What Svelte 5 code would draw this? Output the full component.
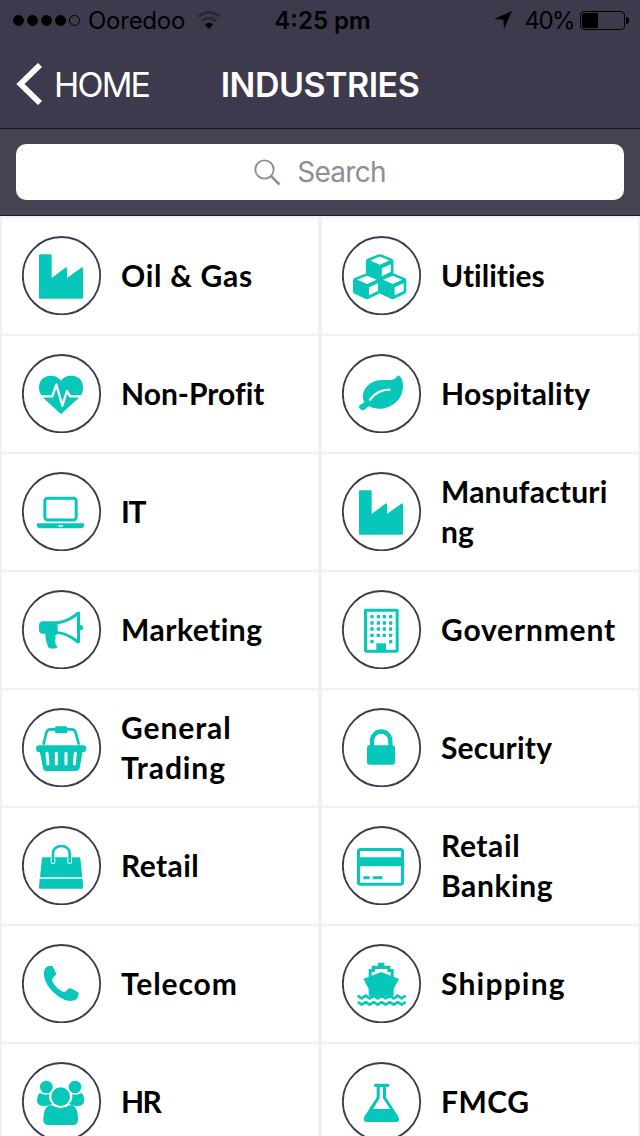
<script lang="ts">
interface Industry {
  name: string;
  icon: string;
  track: number;
}

const industries: Industry[] = [
  { name: "Oil & Gas", icon: "factory", track: 0.7 },
  { name: "Utilities", icon: "cubes", track: 0 },
  { name: "Non-Profit", icon: "heartbeat", track: 0 },
  { name: "Hospitality", icon: "leaf", track: 0.3 },
  { name: "IT", icon: "laptop", track: -1.5 },
  { name: "Manufacturing", icon: "factory", track: 0.2 },
  { name: "Marketing", icon: "megaphone", track: 0.5 },
  { name: "Government", icon: "building", track: 0.8 },
  { name: "General Trading", icon: "basket", track: 0.9 },
  { name: "Security", icon: "lock", track: 0.2 },
  { name: "Retail", icon: "bag", track: 0.4 },
  { name: "Retail Banking", icon: "card", track: 0.6 },
  { name: "Telecom", icon: "phone", track: 0.9 },
  { name: "Shipping", icon: "ship", track: 1.2 },
  { name: "HR", icon: "people", track: -1.5 },
  { name: "FMCG", icon: "flask", track: 0.5 },
];

const signal = [true, true, true, true, false];
const battery = 40;

const cubeOffsets = [[0, 0], [77, 0], [38.5, -57.5]];
const windows = [75, 94, 112, 131, 150].flatMap((y, row) =>
  (row === 4 ? [85, 141] : [85, 104, 122, 141]).map((x) => ({ x, y })),
);
const wave = "l12 8l12-8".repeat(6);
</script>

{#snippet glyph(name: string)}
  {#if name === "factory"}
    <path d="M54 55h31q4 0 4 4v67l41-31q5-3 5 1v30l43-31q5-3 5 1v89q0 3-3 3H54q-3 0-3-3V58q0-3 3-3z" />
  {:else if name === "cubes"}
    {#each cubeOffsets as [x, y]}
      <path
        transform={`translate(${x} ${y})`}
        fill-rule="evenodd"
        d="M70 113q5-2 10 0l31 13q5 2 5 7v33q0 5-5 7l-31 15q-5 2-10 0l-32-15q-5-2-5-7v-33q0-5 5-7zM75 119L46 131l29 13 29-13zM81 154v24l27-13v-23z"
      />
    {/each}
  {:else if name === "heartbeat"}
    <path d="M117 81C108 68 97 65 86 65C64 65 51 80 51 99C51 118 60 128 70 137L113 177Q117 181 121 177L164 137C176 127 183 118 183 99C183 80 170 65 149 65C136 65 125 68 117 81z" />
    <path class="cut" stroke-width="7" d="M49 127H91L103 92L121 155L135 111L144 127H185" />
  {:else if name === "leaf"}
    <path d="M172 65C180 72 183 82 183 95C183 140 145 165 108 164C95 164 87 159 82 157C74 159 69 170 62 169C55 168 50 162 51 157C52 152 60 152 66 145C69 141 60 137 63 122C66 98 90 82 110 79C135 76 150 82 162 71Q168 63 172 65z" />
    <path class="cut" stroke-width="7" d="M84 137Q106 107 142 107" />
  {:else if name === "laptop"}
    <rect class="line" x="68.500" y="79" width="94" height="65" rx="8" />
    <path fill-rule="evenodd" d="M45 154h141v7q-2 8-12 8H57q-10 0-12-8zM109 159v5h14v-5z" />
  {:else if name === "megaphone"}
    <path fill-rule="evenodd" d="M63 94H104C128 93 150 79 164 67Q169 63 174 67V105Q183 105 183 113T174 121V156Q170 164 164 159C146 144 126 133 106 132Q96 137 102 145Q96 150 101 157Q98 164 107 171C104 177 86 177 80 174C74 158 70 148 70 131H62Q51 130 51 119V106Q51 95 63 94zM107 102V124C128 126 150 137 165 148V78C150 89 128 101 107 102z" />
  {:else if name === "building"}
    <rect class="line" x="70.500" y="60.500" width="95" height="123" rx="1" />
    {#each windows as w}
      <rect x={w.x} y={w.y} width="10" height="10" rx="2" />
    {/each}
    <rect x="103" y="160" width="29" height="24" />
  {:else if name === "basket"}
    <path class="line thin" d="M65 107L73 74Q76 64 86 64H149Q158 64 161 74L170 107" />
    <rect x="99" y="55" width="37" height="21" rx="5" />
    <rect x="42" y="112" width="151" height="20" rx="10" />
    <path d="M53 128H182L173 181Q171 189 164 189H71Q65 189 63 181z" />
    <path class="cut" stroke-width="9" d="M75 136L78 168M103 136V168M132 136V168M160 136L157 168" />
  {:else if name === "bag"}
    <path d="M64 94H171Q174 94 175 97L181 154H54L60 97Q61 94 64 94zM53 158H182L183 185Q183 188 180 188H54Q51 188 51 185z" />
    <path class="cut" stroke-width="14" d="M93 98V107M143 98V107" />
    <path class="line thin" d="M93 107V81a25 21 0 0 1 50 0V107" />
  {:else if name === "lock"}
    <rect x="75" y="112" width="84" height="58" rx="7" />
    <path class="line thick" d="M90 116V98a27.500 27.500 0 0 1 55 0V116" />
  {:else if name === "card"}
    <rect class="line" x="49.500" y="70.500" width="132" height="104" rx="6" />
    <path d="M46 94H185V121H46zM64 151H83V160H64zM92 151H121V160H92z" />
  {:else if name === "phone"}
    <path d="M92 67L102 88Q104 92 98 96T90 108C93 122 112 141 126 144Q131 144 136 137Q141 131 146 133L166 143Q170 145 170 150Q168 162 163 166C150 173 137 172 122 164C99 153 75 127 69 107C65 94 64 84 69 74C74 66 86 63 92 67z" />
  {:else if name === "ship"}
    <path d="M108 56h19v9h18v10h10V99L171 104L155 135V154L143 163L131 156L118 163L106 156L93 163L80 154V135L64 104L80 99V75h9V65h19zM99 75v9H89V95L117 84L146 95V84H136V75z" fill-rule="evenodd" />
    <path class="line zigzag" d={`M47 155${wave}M47 174${wave}`} />
  {:else if name === "people"}
    <circle cx="73" cy="75" r="19" />
    <circle cx="159" cy="75" r="19" />
    <path d="M54 93Q66 102 81 96Q79 115 91 126Q80 131 71 132Q45 133 45 117Q46 96 54 93zM178 93Q166 102 151 96Q153 115 141 126Q152 131 161 132Q187 133 186 117Q186 96 178 93z" />
    <circle cx="116" cy="104" r="28" />
    <path d="M88 129Q116 147 144 129C158 127 169 142 168 175Q167 189 154 189H79Q64 189 64 175C64 146 73 129 88 129z" />
  {:else if name === "flask"}
    <path fill-rule="evenodd" d="M99 65H139Q142 65 142 70T139 75H132V106L169 164Q176 179 162 180H75Q61 179 67 164L104 106V75H99Q96 75 96 70T99 65zM113 75V109L93 141H144L123 109V75z" />
  {/if}
{/snippet}

<div class="screen">
  <header>
    <div class="status">
      <div class="side">
        <span class="dots">
          {#each signal as on}<i class:on></i>{/each}
        </span>
        <span class="carrier">Ooredoo</span>
        <svg class="wifi" width="24" height="18" viewBox="0 0 24 18">
          <path d="M12 18L7.800 13.500Q12 10.200 16.200 13.500z" />
          <path class="faint" d="M1.300 5.800Q12-3 22.700 5.800M5 9.900Q12 4.400 19 9.900" />
        </svg>
      </div>
      <span class="clock">4:25 pm</span>
      <div class="side right">
        <svg width="18" height="18" viewBox="0 0 18 18"><path d="M18 0L10 18L9.300 8.700L0 8z" /></svg>
        <span class="percent">{battery}%</span>
        <span class="battery"><span class="charge" style={`width: ${battery}%`}></span></span>
      </div>
    </div>
    <nav>
      <div class="back">
        <svg width="27" height="42" viewBox="0 0 27 42"><path d="M24 2L4.500 21L24 40" /></svg>
        <span>HOME</span>
      </div>
      <h1>INDUSTRIES</h1>
    </nav>
  </header>

  <div class="search">
    <div class="field">
      <svg width="27" height="27" viewBox="0 0 27 27">
        <circle cx="10.500" cy="10.500" r="9.200" />
        <path d="M17.300 17.300L25.500 25.500" stroke-width="2.600" />
      </svg>
      <span>Search</span>
    </div>
  </div>

  <main>
    {#each industries as item (item.name)}
      <div class="cell">
        <svg class="badge" width="80" height="79" viewBox="0 0 240 237">
          <circle class="ring" cx="118.500" cy="119" r="116" />
          {@render glyph(item.icon)}
        </svg>
        <span class="label" style={`letter-spacing: ${item.track}px`}>{item.name}</span>
      </div>
    {/each}
  </main>
</div>

<style>
  :global(body) { margin: 0; }
  .screen {
    width: 640px;
    height: 1136px;
    overflow: hidden;
    background: #efeff5;
    font-family: Inter, "Liberation Sans", sans-serif;
  }
  header { height: 128px; background: #3e3a4d; border-bottom: 1px solid #15131c; }
  .status {
    display: grid;
    grid-template-columns: 1fr auto 1fr;
    align-items: center;
    height: 40px;
    padding: 0 11px 0 13px;
    font-size: 24px;
    color: #000;
  }
  .side { display: flex; align-items: center; }
  .right { justify-content: flex-end; }
  .dots { display: flex; gap: 3px; }
  .dots i { box-sizing: border-box; width: 11px; height: 11px; border: 1px solid #000; border-radius: 50%; }
  .dots .on { background: #000; }
  .carrier { margin: 0 12px 0 8px; letter-spacing: -0.25px; }
  .faint { fill: none; stroke: #2a2735; stroke-width: 2.6; }
  .clock { padding-left: 3px; font-weight: 600; }
  .percent { margin: 0 6px 0 13px; letter-spacing: -1.6px; }
  .battery {
    position: relative;
    box-sizing: border-box;
    width: 45px;
    height: 19px;
    padding: 1px;
    margin-right: 4px;
    border: 1px solid #000;
    border-radius: 4px;
  }
  .battery::after {
    content: "";
    position: absolute;
    top: 5px;
    right: -5px;
    width: 3px;
    height: 7px;
    border-radius: 0 3px 3px 0;
    background: #000;
  }
  .charge { display: block; height: 100%; background: #000; border-radius: 2px 0 0 2px; }
  nav {
    display: grid;
    grid-template-columns: 1fr auto 1fr;
    align-items: center;
    height: 88px;
    padding: 0 16px;
    color: #fff;
    font-size: 34px;
  }
  .back { display: flex; align-items: center; gap: 11px; letter-spacing: -1.8px; }
  .back path { fill: none; stroke: #fff; stroke-width: 5.8; }
  h1 { margin: 0; font-size: 34px; font-weight: 600; letter-spacing: -0.5px; }
  .search {
    box-sizing: border-box;
    height: 87px;
    padding: 15px 16px;
    background: #464252;
    border-bottom: 1px solid #1d1a25;
  }
  .field {
    display: flex;
    align-items: center;
    justify-content: center;
    gap: 16px;
    height: 56px;
    border-radius: 10px;
    background: #fff;
    color: #8e8e93;
    font-size: 28px;
    letter-spacing: -0.7px;
  }
  .field svg { fill: none; stroke: #8e8e93; stroke-width: 1.8; }
  main { display: grid; grid-template-columns: 1fr 1fr; grid-auto-rows: 118px; }
  .cell {
    box-sizing: border-box;
    display: flex;
    align-items: center;
    gap: 19px;
    padding: 0 0 1px 20px;
    border: 2px solid #efeff5;
    border-bottom: 0;
    background: #fff;
  }
  .badge { flex: none; fill: #06c7b9; }
  .ring { fill: none; stroke: #3e3a4d; stroke-width: 5.5; }
  .line { fill: none; stroke: #06c7b9; stroke-width: 9; }
  .thin { stroke-width: 8; stroke-linecap: round; }
  .thick { stroke-width: 13; }
  .zigzag { stroke-width: 8; stroke-linejoin: round; }
  .cut { fill: none; stroke: #fff; stroke-linecap: round; stroke-linejoin: round; }
  .label {
    width: 177px;
    padding-bottom: 2px;
    font: 700 30px/40px Lato, "Open Sans", sans-serif;
    font-variant-ligatures: none;
    color: #000;
    overflow-wrap: anywhere;
  }
</style>
